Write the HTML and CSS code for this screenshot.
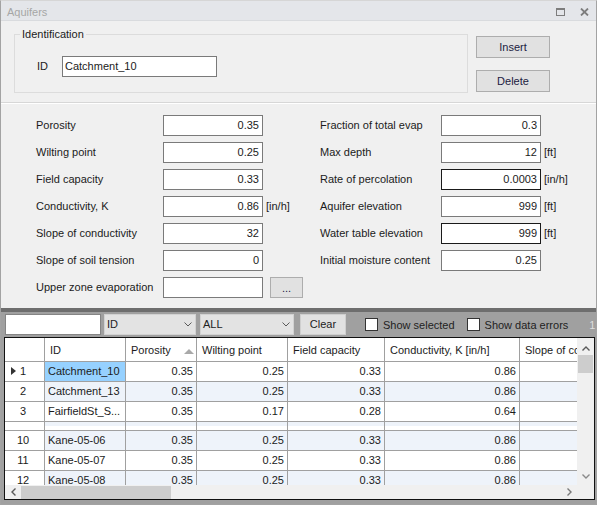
FILE: index.html
```html
<!DOCTYPE html>
<html>
<head>
<meta charset="utf-8">
<link rel="stylesheet" href="styles.css">
</head>
<body>
<div class="window">
  <div class="titlebar">
    <span class="title">Aquifers</span>
    <span class="tb-icons">
      <svg width="9" height="8" viewBox="0 0 9 8"><rect x="0.5" y="1" width="8" height="6.5" fill="none" stroke="#7d7d7d" stroke-width="1"/><rect x="0" y="0" width="9" height="2" fill="#7d7d7d"/></svg>
      <svg width="9" height="8" viewBox="0 0 9 8"><path d="M1 0.5 L8 7.5 M8 0.5 L1 7.5" stroke="#7d7d7d" stroke-width="1.8"/></svg>
    </span>
  </div>

  <div class="top">
    <div class="group">
      <div class="legend">Identification</div>
      <div class="id-row">
        <span class="id-label">ID</span>
        <div class="inp inp-id">Catchment_10</div>
      </div>
    </div>
    <div class="btns">
      <div class="btn">Insert</div>
      <div class="btn">Delete</div>
    </div>
  </div>

  <div class="props">
    <div class="lbl">Porosity</div><div class="inp">0.35</div><div class="unit"></div>
    <div class="lbl">Fraction of total evap</div><div class="inp">0.3</div><div class="unit"></div>

    <div class="lbl">Wilting point</div><div class="inp">0.25</div><div class="unit"></div>
    <div class="lbl">Max depth</div><div class="inp">12</div><div class="unit">[ft]</div>

    <div class="lbl">Field capacity</div><div class="inp">0.33</div><div class="unit"></div>
    <div class="lbl">Rate of percolation</div><div class="inp dark">0.0003</div><div class="unit">[in/h]</div>

    <div class="lbl">Conductivity, K</div><div class="inp">0.86</div><div class="unit">[in/h]</div>
    <div class="lbl">Aquifer elevation</div><div class="inp">999</div><div class="unit">[ft]</div>

    <div class="lbl">Slope of conductivity</div><div class="inp">32</div><div class="unit"></div>
    <div class="lbl">Water table elevation</div><div class="inp dark">999</div><div class="unit">[ft]</div>

    <div class="lbl">Slope of soil tension</div><div class="inp">0</div><div class="unit"></div>
    <div class="lbl">Initial moisture content</div><div class="inp">0.25</div><div class="unit"></div>

    <div class="lbl">Upper zone evaporation</div><div class="inp"></div><div class="unit"><div class="dots">...</div></div>
    <div class="lbl"></div><div></div><div></div>
  </div>

  <div class="darkbar"></div>

  <div class="toolbar">
    <div class="search"></div>
    <div class="dd dd1"><span>ID</span><svg width="8" height="5" viewBox="0 0 8 5"><path d="M0.5 0.5 L4 4 L7.5 0.5" fill="none" stroke="#5a5a5a" stroke-width="1"/></svg></div>
    <div class="dd dd2"><span>ALL</span><svg width="8" height="5" viewBox="0 0 8 5"><path d="M0.5 0.5 L4 4 L7.5 0.5" fill="none" stroke="#5a5a5a" stroke-width="1"/></svg></div>
    <div class="tbtn">Clear</div>
    <div class="cb cb1"></div><span class="cbl">Show selected</span>
    <div class="cb cb2"></div><span class="cbl">Show data errors</span>
    <span class="count">1</span>
  </div>

  <div class="gridwrap">
    <div class="grid">
      <div class="grid-main">
        <div class="table">
          <div class="row hdr">
            <div class="c rh"></div>
            <div class="c w-id">ID</div>
            <div class="c w-por">Porosity<svg class="sort" width="10" height="5" viewBox="0 0 10 5"><path d="M0 5 L5 0 L10 5 Z" fill="#a9a9a9"/></svg></div>
            <div class="c w-wil">Wilting point</div>
            <div class="c w-fld">Field capacity</div>
            <div class="c w-con">Conductivity, K [in/h]</div>
            <div class="c w-slo">Slope of conductivity</div>
          </div>
          <div class="row">
            <div class="c rh cur">1</div>
            <div class="c w-id sel">Catchment_10</div>
            <div class="c w-por num">0.35</div>
            <div class="c w-wil num">0.25</div>
            <div class="c w-fld num">0.33</div>
            <div class="c w-con num">0.86</div>
            <div class="c w-slo"></div>
          </div>
          <div class="row alt">
            <div class="c rh">2</div>
            <div class="c w-id">Catchment_13</div>
            <div class="c w-por num">0.35</div>
            <div class="c w-wil num">0.25</div>
            <div class="c w-fld num">0.33</div>
            <div class="c w-con num">0.86</div>
            <div class="c w-slo"></div>
          </div>
          <div class="row">
            <div class="c rh">3</div>
            <div class="c w-id">FairfieldSt_S...</div>
            <div class="c w-por num">0.35</div>
            <div class="c w-wil num">0.17</div>
            <div class="c w-fld num">0.28</div>
            <div class="c w-con num">0.64</div>
            <div class="c w-slo"></div>
          </div>
          <div class="row gap">
            <div class="c rh"></div>
            <div class="c w-id"></div>
            <div class="c w-por"></div>
            <div class="c w-wil"></div>
            <div class="c w-fld"></div>
            <div class="c w-con"></div>
            <div class="c w-slo"></div>
          </div>
          <div class="row alt">
            <div class="c rh">10</div>
            <div class="c w-id">Kane-05-06</div>
            <div class="c w-por num">0.35</div>
            <div class="c w-wil num">0.25</div>
            <div class="c w-fld num">0.33</div>
            <div class="c w-con num">0.86</div>
            <div class="c w-slo"></div>
          </div>
          <div class="row">
            <div class="c rh">11</div>
            <div class="c w-id">Kane-05-07</div>
            <div class="c w-por num">0.35</div>
            <div class="c w-wil num">0.25</div>
            <div class="c w-fld num">0.33</div>
            <div class="c w-con num">0.86</div>
            <div class="c w-slo"></div>
          </div>
          <div class="row alt">
            <div class="c rh">12</div>
            <div class="c w-id">Kane-05-08</div>
            <div class="c w-por num">0.35</div>
            <div class="c w-wil num">0.25</div>
            <div class="c w-fld num">0.33</div>
            <div class="c w-con num">0.86</div>
            <div class="c w-slo"></div>
          </div>
        </div>
        <div class="vscroll">
          <div class="varrow up"><svg width="8" height="5" viewBox="0 0 8 5"><path d="M0.5 4.5 L4 1 L7.5 4.5" fill="none" stroke="#5a5a5a" stroke-width="1.4"/></svg></div>
          <div class="vthumb"></div>
          <div class="vtrack"></div>
          <div class="varrow down"><svg width="8" height="5" viewBox="0 0 8 5"><path d="M0.5 0.5 L4 4 L7.5 0.5" fill="none" stroke="#8a8a8a" stroke-width="1.4"/></svg></div>
        </div>
      </div>
      <div class="hbar">
        <div class="harrow"><svg width="5" height="8" viewBox="0 0 5 8"><path d="M4.5 0.5 L1 4 L4.5 7.5" fill="none" stroke="#5a5a5a" stroke-width="1.4"/></svg></div>
        <div class="hthumb"></div>
        <div class="htrack"></div>
        <div class="harrow"><svg width="5" height="8" viewBox="0 0 5 8"><path d="M0.5 0.5 L4 4 L0.5 7.5" fill="none" stroke="#7a7a7a" stroke-width="1.4"/></svg></div>
        <div class="corner"></div>
      </div>
    </div>
  </div>
</div>
</body>
</html>
```

FILE: styles.css
```css
* { box-sizing: border-box; }
html, body { margin: 0; padding: 0; }
body {
  font-family: "Liberation Sans", Arial, sans-serif;
  font-size: 11px;
  color: #1b1b1b;
  background: #ffffff;
}

.window {
  width: 597px;
  height: 505px;
  border: 1px solid #a3a3a3;
  border-top-color: #d6d6d6;
  background: #f0f0f0;
  display: flex;
  flex-direction: column;
  overflow: hidden;
}

/* title bar */
.titlebar {
  flex: none;
  height: 20px;
  background: #e4e6ea;
  border-bottom: 1px solid #d9dbde;
  display: flex;
  align-items: flex-start;
  justify-content: space-between;
  padding: 3px 7px 0 6px;
  line-height: 16px;
  color: #a6a6a6;
}
.tb-icons {
  display: flex;
  gap: 15px;
  padding-top: 4px;
}
.tb-icons svg { display: block; }

/* identification */
.top {
  flex: none;
  display: flex;
  align-items: flex-start;
  padding: 13px 0 9px 13px;
}
.group {
  width: 454px;
  border: 1px solid #dcdcdc;
  padding: 0 0 15px 0;
}
.legend {
  width: max-content;
  margin: -7px 0 0 5px;
  padding: 0 2px;
  line-height: 13px;
  background: #f0f0f0;
}
.id-row {
  display: flex;
  align-items: center;
  margin-top: 15px;
  padding-left: 22px;
}
.id-label {
  width: 25px;
  line-height: 21px;
}
.inp {
  height: 21px;
  border: 1px solid #7a7a7a;
  background: #ffffff;
  text-align: right;
  padding-right: 3px;
  line-height: 19px;
  white-space: nowrap;
  overflow: hidden;
}
.inp.dark { border-color: #1a1a1a; }
.inp-id {
  width: 155px;
  text-align: left;
  padding: 0 0 0 2px;
}
.btns {
  display: flex;
  flex-direction: column;
  gap: 12px;
  margin: 2px 0 0 8px;
}
.btn {
  width: 74px;
  height: 22px;
  border: 1px solid #adadad;
  background: #e1e1e1;
  color: #20203f;
  text-align: center;
  line-height: 20px;
}

/* properties */
.props {
  flex: none;
  height: 206px;
  border-top: 1px solid #d7d7d7;
  box-shadow: inset 0 1px 0 #ffffff;
  padding: 12px 0 0 35px;
  display: grid;
  grid-template-columns: 127px 100px 57px 121px 100px 1fr;
  grid-auto-rows: 21px;
  row-gap: 6px;
  align-content: start;
}
.lbl {
  line-height: 21px;
  white-space: nowrap;
}
.unit {
  line-height: 21px;
  padding-left: 3px;
  white-space: nowrap;
}
.dots {
  width: 33px;
  height: 21px;
  margin-left: 4px;
  border: 1px solid #adadad;
  background: #e1e1e1;
  text-align: center;
  line-height: 21px;
  color: #20203f;
}

.darkbar {
  flex: none;
  height: 4px;
  background: #6e6e6e;
}

/* toolbar */
.toolbar {
  flex: none;
  height: 25px;
  background: #a0a0a0;
  display: flex;
  align-items: center;
  padding-left: 4px;
  white-space: nowrap;
  overflow: hidden;
  color: #222222;
}
.search {
  flex: none;
  width: 96px;
  height: 21px;
  background: #ffffff;
  border: 1px solid #858585;
}
.dd {
  flex: none;
  height: 21px;
  background: #e3e3e3;
  border: 1px solid #d2d2d2;
  display: flex;
  align-items: center;
  justify-content: space-between;
  padding: 0 3px 0 2px;
  line-height: 19px;
}
.dd svg { display: block; }
.dd1 { width: 92px; margin-left: 3px; }
.dd2 { width: 94px; margin-left: 4px; }
.tbtn {
  flex: none;
  width: 46px;
  height: 21px;
  margin-left: 6px;
  background: #e1e1e1;
  border: 1px solid #cfcfcf;
  text-align: center;
  line-height: 19px;
}
.cb {
  flex: none;
  width: 13px;
  height: 13px;
  background: #ffffff;
  border: 1px solid #333333;
}
.cb1 { margin-left: 19px; }
.cb2 { margin-left: 12px; }
.cbl { margin-left: 5px; }
.count { margin-left: 21px; color: #dedede; }

/* data grid */
.gridwrap {
  flex: 1;
  background: #a0a0a0;
  padding: 0 1px 4px 3px;
}
.grid {
  height: 163px;
  border: 1px solid #111111;
  background: #ffffff;
  display: flex;
  flex-direction: column;
}
.grid-main {
  display: flex;
  height: 147px;
}
.table {
  flex: 1;
  overflow: hidden;
}
.row {
  display: flex;
  height: 20px;
  line-height: 19px;
  white-space: nowrap;
}
.row.alt .c { background: #eef3fa; }
.row.gap { height: 9px; }
.row.gap .c { background: linear-gradient(#eef3fa 55%, #ffffff 55%); }
.c {
  flex: none;
  height: 100%;
  border-right: 1px solid #a0a0a0;
  border-bottom: 1px solid #a0a0a0;
  padding: 0 3px;
  overflow: hidden;
  background: #ffffff;
}
.row .c.rh { background: #ffffff; text-align: center; padding: 0 3px 0 0; position: relative; }
.c.num { text-align: right; }
.c.sel { background: #96d1ff; }
.cur::before {
  content: "";
  position: absolute;
  left: 6px;
  top: 5px;
  border-left: 5px solid #333333;
  border-top: 4.5px solid transparent;
  border-bottom: 4.5px solid transparent;
}
.row.hdr { height: 24px; line-height: 21px; }
.row.hdr .c { padding: 2px 2px 0 5px; display: flex; align-items: center; }
.row.hdr .c.rh { padding: 0; }
.sort { margin-left: auto; margin-top: 1px; }

.rh { width: 40px; }
.w-id { width: 81px; }
.w-por { width: 71px; }
.w-wil { width: 91px; }
.w-fld { width: 97px; }
.w-con { width: 135px; }
.w-slo { width: 110px; }

.vscroll {
  flex: none;
  width: 17px;
  background: #f0f0f0;
  display: flex;
  flex-direction: column;
}
.varrow {
  height: 17px;
  display: flex;
  align-items: center;
  justify-content: center;
}
.varrow svg { display: block; }
.varrow.up { padding-top: 3px; }
.vthumb {
  height: 18px;
  margin: 0 1px;
  background: #cdcdcd;
}
.vtrack { flex: 1; }

.hbar {
  height: 14px;
  display: flex;
  background: #f0f0f0;
}
.harrow {
  width: 16px;
  display: flex;
  align-items: center;
  justify-content: center;
}
.harrow svg { display: block; }
.hthumb {
  width: 150px;
  margin: 1px 0 0 0;
  background: #cdcdcd;
}
.htrack { flex: 1; }
.corner { width: 17px; }
```
